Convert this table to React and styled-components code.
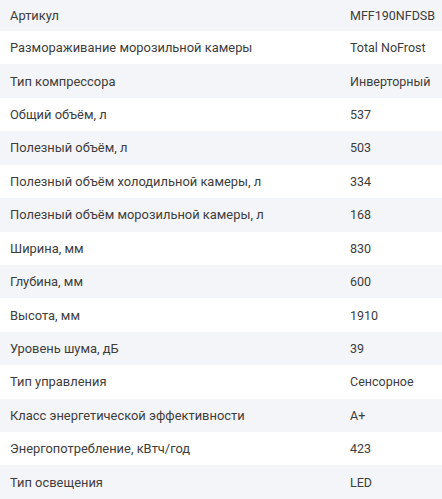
import React from 'react';
import styled, { createGlobalStyle } from 'styled-components';

const specs = [
    ['Артикул', 'MFF190NFDSB'],
    ['Размораживание морозильной камеры', 'Total NoFrost'],
    ['Тип компрессора', 'Инверторный'],
    ['Общий объём, л', '537'],
    ['Полезный объём, л', '503'],
    ['Полезный объём холодильной камеры, л', '334'],
    ['Полезный объём морозильной камеры, л', '168'],
    ['Ширина, мм', '830'],
    ['Глубина, мм', '600'],
    ['Высота, мм', '1910'],
    ['Уровень шума, дБ', '39'],
    ['Тип управления', 'Сенсорное'],
    ['Класс энергетической эффективности', 'A+'],
    ['Энергопотребление, кВтч/год', '423'],
    ['Тип освещения', 'LED'],
];

function App() {
    return (
        <>
            <GlobalStyle />
            <Table>
                {specs.map(([name, value], i) => (
                    <Row key={name} $striped={i % 2 === 0} $first={i === 0}>
                        <span>{name}</span>
                        <Value>{value}</Value>
                    </Row>
                ))}
            </Table>
        </>
    )
}

export default App;

const GlobalStyle = createGlobalStyle`
    body {
        margin: 0;
        background: #fff;
        font-family: Roboto, "Noto Sans", sans-serif;
    }
`

const Table = styled.ul`
    list-style: none;
    margin: 0;
    padding: 0;
    width: 442px;
`

const Row = styled.li`
    display: grid;
    grid-template-columns: 340px 1fr;
    align-items: center;
    height: ${p => p.$first ? '31px' : '33.43px'};
    padding-left: 10px;
    background: ${p => p.$striped ? '#f4f5f8' : '#fff'};
    font-size: 12.9px;
    color: #3d3d3d;
    white-space: nowrap;
`

const Value = styled.span`
    font-size: 12.5px;
`
